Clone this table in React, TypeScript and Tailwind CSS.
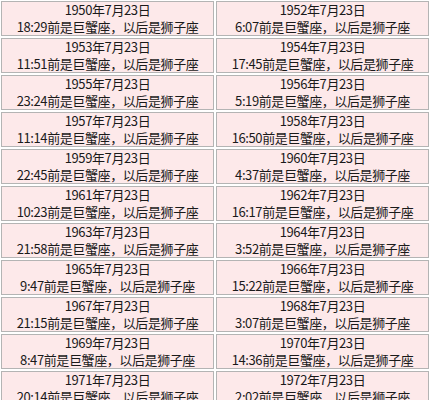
import { Fragment } from 'react';

const rows: [number, string, number, string][] = [
  [1950, '18:29', 1952, '6:07'],
  [1953, '11:51', 1954, '17:45'],
  [1955, '23:24', 1956, '5:19'],
  [1957, '11:14', 1958, '16:50'],
  [1959, '22:45', 1960, '4:37'],
  [1961, '10:23', 1962, '16:17'],
  [1963, '21:58', 1964, '3:52'],
  [1965, '9:47', 1966, '15:22'],
  [1967, '21:15', 1968, '3:07'],
  [1969, '8:47', 1970, '14:36'],
  [1971, '20:14', 1972, '2:02'],
];

function Cell({ year, time }: { year: number; time: string }) {
  return (
    <div className="h-[35px] border border-[#b4b4b4] bg-[#fde9ea] flex flex-col items-center justify-center text-[13px] leading-[16.5px] tracking-[-0.4px] text-[#1a1a1a]">
      <div>{year}年7月23日</div>
      <div>{time}前是巨蟹座，以后是狮子座</div>
    </div>
  );
}

export default function App() {
  return (
    <div
      className="w-[430px] h-[400px] overflow-hidden bg-white pt-[1px] pl-[1px]"
      style={{ fontFamily: '"Noto Sans CJK SC", "Liberation Sans", sans-serif' }}
    >
      <div className="grid grid-cols-[213px_213px] gap-x-[2px] gap-y-[2px]">
        {rows.map(([y1, t1, y2, t2]) => (
          <Fragment key={y1}>
            <Cell year={y1} time={t1} />
            <Cell year={y2} time={t2} />
          </Fragment>
        ))}
      </div>
    </div>
  );
}
